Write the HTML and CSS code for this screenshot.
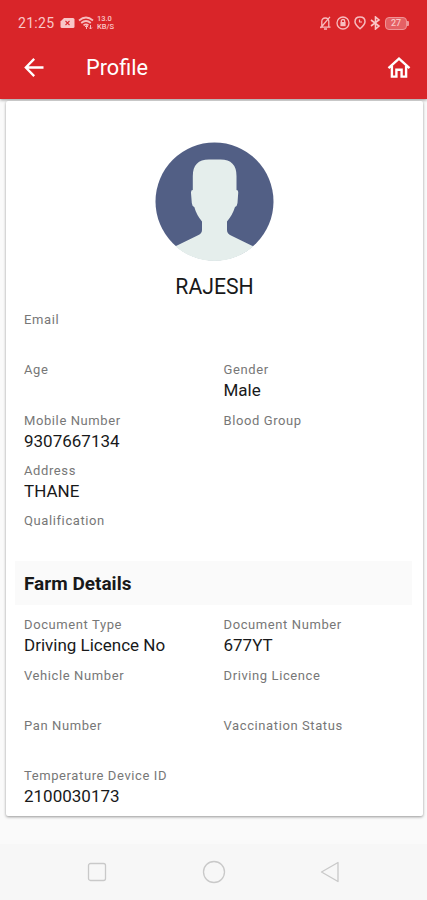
FILE: index.html
```html
<!DOCTYPE html>
<html lang="en">
<head>
<meta charset="utf-8">
<title>Profile</title>
<link rel="stylesheet" href="styles.css">
</head>
<body>
<div class="screen">
  <header class="header">
    <div class="status">
      <div class="status-left">
        <span class="time">21:25</span>
        <svg class="sim" width="15" height="12" viewBox="0 0 15 12"><path d="M4 1h9q1.500 0 1.500 1.500v7q0 1.500-1.500 1.500h-11q-1.500 0-1.500-1.500v-5z" fill="#f9c6c7"/><path d="M5.500 4l4 4M9.500 4l-4 4" stroke="#d92a2f" stroke-width="1.100"/></svg>
        <svg class="wifi" width="16" height="14" viewBox="0 0 16 14" fill="none" stroke="#f7bcbe" stroke-width="1.700"><path d="M1 4.500q7-6 14 0M3.200 7q4.800-4 9.600 0M5.500 9.300q2.500-2 5 0"/><path d="M8.500 9.500v3.500M12.500 9v4M7 11l1.500-1.500L10 11M11 11.500l1.500 1.500 1.500-1.500" stroke-width="1"/></svg>
        <span class="speed"><span>13.0</span><span>KB/S</span></span>
      </div>
      <div class="status-right">
        <svg width="13" height="14" viewBox="0 0 13 14" fill="none" stroke="#f7bcbe" stroke-width="1.300"><path d="M1 11.200h10.500M2.800 11V5.500q0-3.500 3.500-3.500t3.500 3.500V11M5 13h3M1.500 12L11 .8"/></svg>
        <svg width="14" height="14" viewBox="0 0 14 14" fill="none" stroke="#f7bcbe" stroke-width="1.300"><circle cx="7" cy="7" r="6"/><rect x="4.400" y="6" width="5.200" height="4.200" fill="#f7bcbe" stroke="none"/><path d="M5.300 6V5q0-1.500 1.700-1.500T8.700 5v1"/></svg>
        <svg width="12" height="14" viewBox="0 0 12 14" fill="none" stroke="#f7bcbe" stroke-width="1.500"><path d="M6 12.700Q1 8.500 1 5.700 1 1 6 1t5 4.700q0 2.800-5 7z"/><path d="M5.500 3.500V6H8" stroke-width="1.200"/></svg>
        <svg width="11" height="14" viewBox="0 0 11 14" fill="none" stroke="#f9c6c7" stroke-width="1.600"><path d="M1 4l8 6-3.500 3V1L9 4l-8 6"/></svg>
        <span class="battery">27</span><span class="nub"></span>
      </div>
    </div>
    <div class="toolbar">
      <svg class="back" width="20" height="20" viewBox="0 0 20 20" fill="none" stroke="#fff" stroke-width="2.300"><path d="M19.500 9.500H2M10.200 .9L1.800 9.500l8.400 8.600"/></svg>
      <h1>Profile</h1>
      <svg class="home" width="24" height="22" viewBox="0 0 24 22" fill="none" stroke="#fff" stroke-width="2.400"><path d="M1.500 11.200L12 1.700l10.500 9.500M4.900 9v10.600h4.500v-6.900h5.200v6.900h4.500V9"/></svg>
    </div>
  </header>
  <main class="card">
    <svg class="avatar" width="119" height="119" viewBox="0 0 119 119">
      <defs><clipPath id="disc"><circle cx="59.500" cy="59.500" r="59.300"/></clipPath></defs>
      <circle cx="59.500" cy="59.500" r="59" fill="#525f85"/>
      <g clip-path="url(#disc)">
        <path d="M37.800 48V34Q37.800 17.500 54 17.500h11.500Q81.500 17.500 81.500 34v14q2 0 1.700 3l-.7 10q-.3 3-2.500 4-2.500 8-8 14.500v8.500q0 3.500 4 5.500l21.500 10.500L96 119H22L21 104l21.500-10.500q4.500-2 4.500-5.500v-8.500Q41.500 73 39.300 65q-2.300-1-2.500-4l-.8-10q-.2-3 1.800-3z" fill="#e5eeec"/>
        <path d="M21 104.500q38.500 28 77 0" fill="none" stroke="#e5eeec" stroke-width="2"/>
      </g>
    </svg>
    <div class="name">RAJESH</div>
    <section class="fields">
      <div class="field wide"><label>Email</label></div>
      <div class="field"><label>Age</label></div>
      <div class="field"><label>Gender</label><p>Male</p></div>
      <div class="field"><label>Mobile Number</label><p>9307667134</p></div>
      <div class="field"><label>Blood Group</label></div>
      <div class="field wide"><label>Address</label><p>THANE</p></div>
      <div class="field wide"><label>Qualification</label></div>
    </section>
    <h2>Farm Details</h2>
    <section class="fields">
      <div class="field"><label>Document Type</label><p>Driving Licence No</p></div>
      <div class="field"><label>Document Number</label><p>677YT</p></div>
      <div class="field"><label>Vehicle Number</label></div>
      <div class="field"><label>Driving Licence</label></div>
      <div class="field"><label>Pan Number</label></div>
      <div class="field"><label>Vaccination Status</label></div>
      <div class="field wide"><label>Temperature Device ID</label><p>2100030173</p></div>
    </section>
  </main>
  <nav class="navbar">
    <svg width="20" height="20" viewBox="0 0 20 20"><rect x="1.500" y="1.500" width="17" height="17" rx="2"/></svg>
    <svg width="24" height="24" viewBox="0 0 24 24"><circle cx="12" cy="12" r="10.500"/></svg>
    <svg width="20" height="22" viewBox="0 0 20 22"><path d="M1.500 11L18 1.500v19z"/></svg>
  </nav>
</div>
</body>
</html>
```
FILE: styles.css
```css
* { box-sizing: border-box; }
body { margin: 0; font-family: Roboto, sans-serif; color: #18191a; }
h1, h2, p { margin: 0; font-weight: 400; }
svg { display: block; flex: none; }
.screen { height: 900px; display: flex; flex-direction: column; background: #fafafa; overflow: hidden; }
.header { height: 99px; flex: none; background: #d92529; box-shadow: 0 1px 3px rgba(0,0,0,.4); }
.status { height: 46px; padding: 0 18px; display: flex; align-items: center; justify-content: space-between; color: #f9c6c7; }
.status-left, .status-right { display: flex; align-items: center; }
.time { width: 37px; font-size: 14px; letter-spacing: .3px; line-height: 16px; }
.sim { margin-left: 5px; }
.wifi { margin-left: 3px; }
.speed { margin-left: 3px; display: flex; flex-direction: column; font-size: 7.500px; line-height: 8px; font-weight: 500; }
.status-right { gap: 4px; }
.battery { width: 22px; height: 13px; border: 1px solid #ef9496; border-radius: 4px; background: #e56064; font-size: 9px; font-weight: 500; line-height: 11px; text-align: center; }
.nub { width: 2px; height: 5px; margin-left: -4px; background: #ef9496; border-radius: 0 1px 1px 0; }
.toolbar { height: 44px; padding: 0 16px 0 24px; display: flex; align-items: center; color: #fff; }
.toolbar h1 { margin-left: 42px; font-size: 21.700px; line-height: 26px; flex: 1; }
.card { width: 417px; height: 715px; margin: 2px 0 0 6px; flex: none; padding-top: 41px; background: #fff; border-radius: 2px; box-shadow: 0 1px 3px rgba(0,0,0,.4); }
.avatar { margin: 0 auto; }
.name { height: 48px; padding-top: 13px; font-size: 21.200px; line-height: 26px; text-align: center; }
.fields { display: grid; grid-template-columns: 199.500px 1fr; grid-auto-rows: 50.300px; padding: 0 0 0 18px; }
.wide { grid-column: 1 / -1; }
.field label { display: block; font-size: 13px; line-height: 21px; letter-spacing: .6px; color: #777; }
.field p { font-size: 17px; line-height: 20px; }
.card h2 { height: 44px; margin: 1px 11px 9px 9px; padding-left: 9px; background: #fafafa; font-size: 19px; font-weight: 700; line-height: 46px; }
.navbar { flex: none; height: 56px; margin-top: auto; padding: 0 87px; display: flex; align-items: center; justify-content: space-between; background: #f7f7f7; fill: none; stroke: #c9c9c9; stroke-width: 1.300; stroke-linejoin: round; }
```
